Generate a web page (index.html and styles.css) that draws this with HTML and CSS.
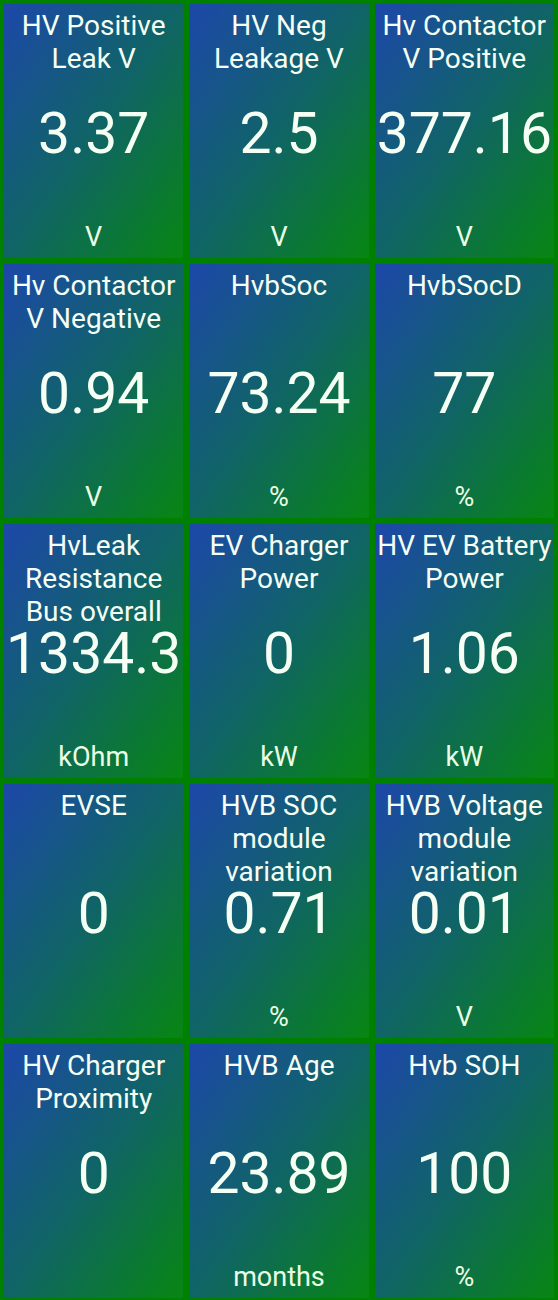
FILE: index.html
```html
<!DOCTYPE html>
<html lang="en">
<head>
  <meta charset="UTF-8">
  <meta name="viewport" content="width=device-width, initial-scale=1.0">
  <title>HV Dashboard</title>
  <link rel="stylesheet" href="styles.css">
</head>
<body>
  <div class="gauge-grid">
    <div class="gauge">
      <div class="gauge-title">HV Positive Leak V</div>
      <div class="gauge-value">3.37</div>
      <div class="gauge-unit">V</div>
    </div>
    <div class="gauge">
      <div class="gauge-title">HV Neg Leakage V</div>
      <div class="gauge-value">2.5</div>
      <div class="gauge-unit">V</div>
    </div>
    <div class="gauge">
      <div class="gauge-title">Hv Contactor V Positive</div>
      <div class="gauge-value">377.16</div>
      <div class="gauge-unit">V</div>
    </div>

    <div class="gauge">
      <div class="gauge-title">Hv Contactor V Negative</div>
      <div class="gauge-value">0.94</div>
      <div class="gauge-unit">V</div>
    </div>
    <div class="gauge">
      <div class="gauge-title">HvbSoc</div>
      <div class="gauge-value">73.24</div>
      <div class="gauge-unit">%</div>
    </div>
    <div class="gauge">
      <div class="gauge-title">HvbSocD</div>
      <div class="gauge-value">77</div>
      <div class="gauge-unit">%</div>
    </div>

    <div class="gauge">
      <div class="gauge-title">HvLeak Resistance Bus overall</div>
      <div class="gauge-value">1334.3</div>
      <div class="gauge-unit">kOhm</div>
    </div>
    <div class="gauge">
      <div class="gauge-title">EV Charger Power</div>
      <div class="gauge-value">0</div>
      <div class="gauge-unit">kW</div>
    </div>
    <div class="gauge">
      <div class="gauge-title">HV EV Battery Power</div>
      <div class="gauge-value">1.06</div>
      <div class="gauge-unit">kW</div>
    </div>

    <div class="gauge">
      <div class="gauge-title">EVSE</div>
      <div class="gauge-value">0</div>
      <div class="gauge-unit"></div>
    </div>
    <div class="gauge">
      <div class="gauge-title">HVB SOC module variation</div>
      <div class="gauge-value">0.71</div>
      <div class="gauge-unit">%</div>
    </div>
    <div class="gauge">
      <div class="gauge-title">HVB Voltage module variation</div>
      <div class="gauge-value">0.01</div>
      <div class="gauge-unit">V</div>
    </div>

    <div class="gauge">
      <div class="gauge-title">HV Charger Proximity</div>
      <div class="gauge-value">0</div>
      <div class="gauge-unit"></div>
    </div>
    <div class="gauge">
      <div class="gauge-title">HVB Age</div>
      <div class="gauge-value">23.89</div>
      <div class="gauge-unit">months</div>
    </div>
    <div class="gauge">
      <div class="gauge-title">Hvb SOH</div>
      <div class="gauge-value">100</div>
      <div class="gauge-unit">%</div>
    </div>
  </div>
</body>
</html>
```

FILE: styles.css
```css
* {
  margin: 0;
  padding: 0;
  box-sizing: border-box;
}

body {
  font-family: Roboto, 'Noto Sans', sans-serif;
  background-color: #008000;
  color: #f6fff4;
  min-height: 100vh;
  overflow: hidden;
}

.gauge-grid {
  display: grid;
  grid-template-columns: repeat(3, 1fr);
  grid-auto-rows: 254px;
  gap: 6px;
  padding: 4px;
}

/* each tile stacks title / value / unit in one cell */
.gauge {
  display: grid;
  grid-template: 1fr / 1fr;
  justify-items: center;
  text-align: center;
  padding: 5px 0 6px;
  background: linear-gradient(to bottom right, #1d47aa 0%, #106466 50%, #078612 100%);
  overflow: hidden;
}

.gauge > div {
  grid-area: 1 / 1;
}

.gauge-title {
  align-self: start;
  font-size: 28px;
  line-height: 33px;
  padding: 0 2px;
}

.gauge-value {
  align-self: center;
  margin-top: 6px;
  font-size: 57px;
  line-height: 46px;
  white-space: nowrap;
}

.gauge-unit {
  align-self: end;
  font-size: 27px;
  line-height: 30px;
  color: #eaffe4;
}
```
